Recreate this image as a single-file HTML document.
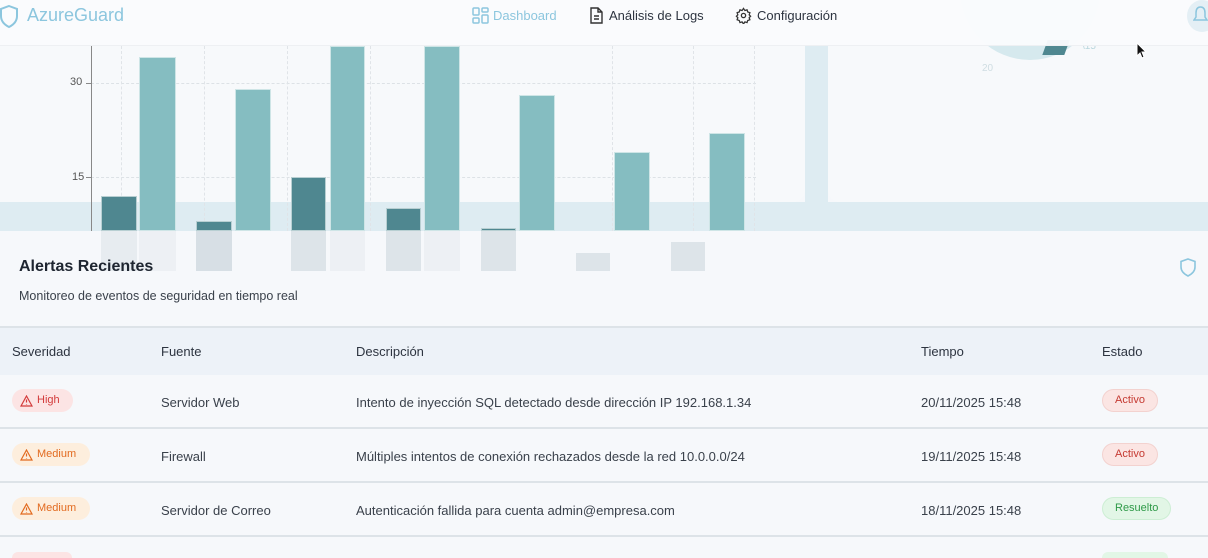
<!DOCTYPE html>
<html><head><meta charset="utf-8"><style>
*{box-sizing:border-box;margin:0;padding:0}
html,body{width:1208px;height:558px;overflow:hidden}
body{background:#f6f8fb;font-family:"Liberation Sans",sans-serif;position:relative;color:#2d3440}
.abs{position:absolute}
.bar{position:absolute;border:1px solid rgba(255,255,255,.6)}
.d{background:#4f8790}.l{background:#85bdc1}
.ghost{position:absolute;background:#d7dfe5}
.row{position:absolute;left:0;width:1208px;height:54px;border-bottom:2px solid #dde3e8;font-size:13px;color:#3a414b}
.row span{position:absolute;top:20px}
.pill{position:absolute;top:14px;height:23px;border-radius:12px;font-size:11px;line-height:23px;padding:0 12px;display:flex;align-items:center;gap:4px}
</style></head><body>
<div class="abs" style="left:0;top:46px;width:805px;height:156px;background:#f7f9fb;border-radius:0 0 12px 0"></div>
<div class="abs" style="left:805px;top:46px;width:23px;height:160px;background:#deecf2"></div>
<div class="abs" style="left:828px;top:46px;width:380px;height:156px;background:#f7f9fb;border-radius:0 0 0 12px"></div>
<div class="abs" style="left:0;top:202px;width:1208px;height:29px;background:#deecf2"></div>
<div class="abs" style="left:91px;top:83px;width:665px;border-top:1px dashed #dde2e6"></div>
<div class="abs" style="left:91px;top:177px;width:665px;border-top:1px dashed #dde2e6"></div>
<div class="abs" style="left:121px;top:46px;height:185px;border-left:1px dashed #e0e4e8"></div>
<div class="abs" style="left:204px;top:46px;height:185px;border-left:1px dashed #e0e4e8"></div>
<div class="abs" style="left:287px;top:46px;height:185px;border-left:1px dashed #e0e4e8"></div>
<div class="abs" style="left:370px;top:46px;height:185px;border-left:1px dashed #e0e4e8"></div>
<div class="abs" style="left:452px;top:46px;height:185px;border-left:1px dashed #e0e4e8"></div>
<div class="abs" style="left:612px;top:46px;height:185px;border-left:1px dashed #e0e4e8"></div>
<div class="abs" style="left:693px;top:46px;height:185px;border-left:1px dashed #e0e4e8"></div>
<div class="abs" style="left:754px;top:46px;height:185px;border-left:1px dashed #e0e4e8"></div>
<div class="abs" style="left:79px;top:46px;width:13px;height:185px;border-right:1px solid #888"></div>
<div class="abs" style="left:86px;top:83px;width:5px;border-top:1px solid #888"></div>
<div class="abs" style="left:86px;top:177px;width:5px;border-top:1px solid #888"></div>
<div class="abs" style="left:70px;top:76px;font-size:11px;color:#555">30</div>
<div class="abs" style="left:72px;top:171px;font-size:11px;color:#555">15</div>
<div class="bar d" style="left:101px;top:196px;width:36px;height:35px"></div>
<div class="bar l" style="left:139px;top:57px;width:37px;height:174px"></div>
<div class="bar d" style="left:196px;top:221px;width:36px;height:10px"></div>
<div class="bar l" style="left:235px;top:89px;width:36px;height:142px"></div>
<div class="bar d" style="left:291px;top:177px;width:35px;height:54px"></div>
<div class="bar l" style="left:330px;top:46px;width:35px;height:185px"></div>
<div class="bar d" style="left:386px;top:208px;width:35px;height:23px"></div>
<div class="bar l" style="left:424px;top:46px;width:36px;height:185px"></div>
<div class="bar d" style="left:481px;top:228px;width:35px;height:3px"></div>
<div class="bar l" style="left:519px;top:95px;width:36px;height:136px"></div>
<div class="bar l" style="left:614px;top:152px;width:36px;height:79px"></div>
<div class="bar l" style="left:709px;top:133px;width:36px;height:98px"></div>
<div class="abs" style="left:960px;top:-20px;width:140px;height:80px;border-radius:0 0 70px 70px;background:#d6e9ee"></div>
<div class="abs" style="left:1045px;top:40px;width:22px;height:15px;background:#4f8790;transform:skewX(-20deg)"></div>
<div class="abs" style="left:1082px;top:41px;font-size:10px;color:#b9d6dd">\15</div>
<div class="abs" style="left:982px;top:63px;font-size:10px;color:#cfdde2">20</div>
<div class="abs" style="left:0;top:0;width:1208px;height:46px;background:rgba(250,251,253,.96);border-bottom:1px solid #eef0f3"></div>
<svg class="abs" style="left:0;top:5px" width="20" height="24" viewBox="0 0 20 24"><path d="M9 1 L17 4 V11 C17 17 13 20 9 22 C5 20 1 17 1 11 V4 Z" fill="none" stroke="#8cc6de" stroke-width="2"/></svg>
<div class="abs" style="left:27px;top:5px;font-size:18px;color:#8cc6de">AzureGuard</div>
<svg class="abs" style="left:472px;top:7px" width="17" height="17" viewBox="0 0 17 17" fill="none" stroke="#8cc6de" stroke-width="1.5"><rect x="1" y="1" width="6" height="7" rx="1"/><rect x="10" y="1" width="6" height="4" rx="1"/><rect x="10" y="8" width="6" height="8" rx="1"/><rect x="1" y="11" width="6" height="5" rx="1"/></svg>
<div class="abs" style="left:493px;top:8px;font-size:13px;color:#8cc6de">Dashboard</div>
<svg class="abs" style="left:589px;top:7px" width="15" height="17" viewBox="0 0 15 17" fill="none" stroke="#333" stroke-width="1.4"><path d="M2 1h7l4 4v11H2z M9 1v4h4 M5 9h5 M5 12h5"/></svg>
<div class="abs" style="left:609px;top:8px;font-size:13px;color:#2d3440">Análisis de Logs</div>
<svg class="abs" style="left:735px;top:7px" width="17" height="17" viewBox="0 0 24 24" fill="none" stroke="#333" stroke-width="1.8"><circle cx="12" cy="12" r="3"/><path d="M12 2l2 3 3-1 1 3 3 1-1 3 2 2-2 2 1 3-3 1-1 3-3-1-2 3-2-3-3 1-1-3-3-1 1-3-2-2 2-2-1-3 3-1 1-3 3 1z"/></svg>
<div class="abs" style="left:757px;top:8px;font-size:13px;color:#2d3440">Configuración</div>
<div class="abs" style="left:1187px;top:0;width:30px;height:32px;border-radius:50%;background:#e4eff5"></div>
<svg class="abs" style="left:1193px;top:6px" width="15" height="18" viewBox="0 0 15 18" fill="none" stroke="#8cc6de" stroke-width="1.5"><path d="M7.5 1C4 1 3 4 3 7v4l-2 3h13l-2-3V7c0-3-1-6-4.5-6z"/></svg>
<svg class="abs" style="left:1136px;top:42px" width="12" height="18" viewBox="0 0 12 18"><path d="M1 1v13l3-3 2 5 2-1-2-5h4z" fill="#111" stroke="#fff" stroke-width="1"/></svg>
<div class="abs" style="left:0;top:231px;width:1208px;height:97px;background:#f6f8fb"></div>
<div class="ghost" style="left:101px;top:231px;width:36px;height:40px;opacity:.5"></div>
<div class="ghost" style="left:196px;top:231px;width:36px;height:40px"></div>
<div class="ghost" style="left:291px;top:231px;width:35px;height:40px;opacity:.8"></div>
<div class="ghost" style="left:386px;top:231px;width:35px;height:40px;opacity:.8"></div>
<div class="ghost" style="left:481px;top:231px;width:35px;height:40px;opacity:.8"></div>
<div class="ghost" style="left:576px;top:253px;width:34px;height:18px;opacity:.8"></div>
<div class="ghost" style="left:671px;top:242px;width:34px;height:29px;opacity:.8"></div>
<div class="ghost" style="left:139px;top:231px;width:37px;height:40px;opacity:.3"></div>
<div class="ghost" style="left:330px;top:231px;width:35px;height:40px;opacity:.3"></div>
<div class="ghost" style="left:424px;top:231px;width:36px;height:40px;opacity:.3"></div>
<div class="abs" style="left:19px;top:258px;font-size:16px;font-weight:bold;color:#1e2530">Alertas Recientes</div>
<div class="abs" style="left:19px;top:289px;font-size:12.5px;color:#3a414b">Monitoreo de eventos de seguridad en tiempo real</div>
<svg class="abs" style="left:1180px;top:258px" width="16" height="19" viewBox="0 0 16 19"><path d="M8 1L15 3.5V9C15 13.5 12 16 8 18C4 16 1 13.5 1 9V3.5Z" fill="none" stroke="#8cc6de" stroke-width="1.6"/></svg>
<div class="abs" style="left:0;top:326px;width:1208px;height:2px;background:#dde3e8"></div>
<div class="abs" style="left:0;top:328px;width:1208px;height:47px;background:#edf2f8;font-size:13px;color:#2d3440">
<span class="abs" style="left:12px;top:16px">Severidad</span><span class="abs" style="left:161px;top:16px">Fuente</span><span class="abs" style="left:356px;top:16px">Descripción</span><span class="abs" style="left:921px;top:16px">Tiempo</span><span class="abs" style="left:1102px;top:16px">Estado</span></div>
<div class="row" style="top:375px">
<div class="pill" style="left:12px;width:61px;padding:0 8px;background:#fce4e4;color:#d33b3b"><svg width="13" height="12" viewBox="0 0 13 12" fill="none" stroke="#d33b3b" stroke-width="1.2"><path d="M6.5 1L12 11H1Z M6.5 4.5v3 M6.5 9v.5"/></svg>High</div>
<span style="left:161px">Servidor Web</span><span style="left:356px">Intento de inyección SQL detectado desde dirección IP 192.168.1.34</span><span style="left:921px">20/11/2025 15:48</span>
<div class="pill" style="left:1102px;background:#fbe5e3;color:#c53a32;border:1px solid #f3d2cf">Activo</div></div>
<div class="row" style="top:429px">
<div class="pill" style="left:12px;width:78px;padding:0 8px;background:#fdeedd;color:#e26a1f"><svg width="13" height="12" viewBox="0 0 13 12" fill="none" stroke="#e26a1f" stroke-width="1.2"><path d="M6.5 1L12 11H1Z M6.5 4.5v3 M6.5 9v.5"/></svg>Medium</div>
<span style="left:161px">Firewall</span><span style="left:356px">Múltiples intentos de conexión rechazados desde la red 10.0.0.0/24</span><span style="left:921px">19/11/2025 15:48</span>
<div class="pill" style="left:1102px;background:#fbe5e3;color:#c53a32;border:1px solid #f3d2cf">Activo</div></div>
<div class="row" style="top:483px">
<div class="pill" style="left:12px;width:78px;padding:0 8px;background:#fdeedd;color:#e26a1f"><svg width="13" height="12" viewBox="0 0 13 12" fill="none" stroke="#e26a1f" stroke-width="1.2"><path d="M6.5 1L12 11H1Z M6.5 4.5v3 M6.5 9v.5"/></svg>Medium</div>
<span style="left:161px">Servidor de Correo</span><span style="left:356px">Autenticación fallida para cuenta admin@empresa.com</span><span style="left:921px">18/11/2025 15:48</span>
<div class="pill" style="left:1102px;background:#e2f6e6;color:#2e9a48;border:1px solid #cdeed4">Resuelto</div></div>
<div class="abs" style="left:12px;top:552px;width:60px;height:6px;border-radius:8px 8px 0 0;background:#fce4e4"></div>
<div class="abs" style="left:1102px;top:552px;width:66px;height:6px;border-radius:8px 8px 0 0;background:#e2f6e6"></div>
</body></html>
